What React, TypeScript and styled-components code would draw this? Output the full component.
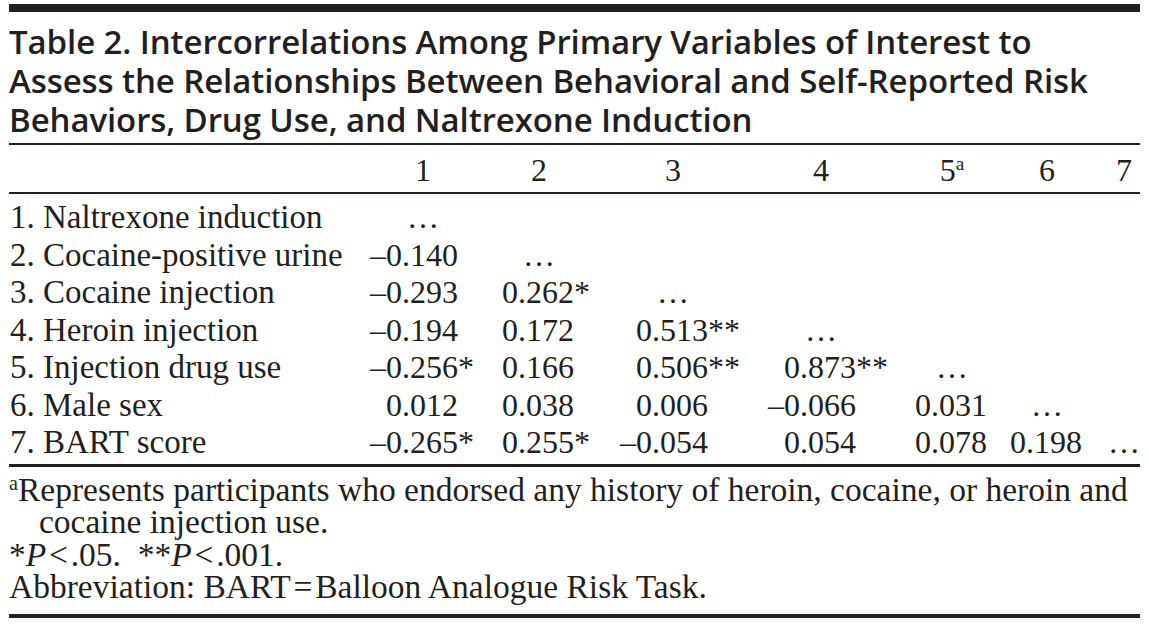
import React from 'react';
import styled, { createGlobalStyle } from 'styled-components';

const GlobalStyle = createGlobalStyle`
  html, body {
    margin: 0;
    padding: 0;
    background: #ffffff;
  }
`;

const INK = '#231f20';

const Page = styled.div`
  width: 1131px;
  padding: 4px 9px 0 9px;
  color: ${INK};
`;

const TopBar = styled.div`
  height: 8px;
  background: ${INK};
`;

const Title = styled.h1`
  margin: 10px 0 0 0;
  font-family: "Open Sans", "Noto Sans", sans-serif;
  font-weight: 600;
  font-size: 33px;
  line-height: 39px;
  letter-spacing: -0.1px;
  white-space: nowrap;
`;

const Rule = styled.div<{ $weight: number }>`
  height: ${(p) => p.$weight}px;
  background: ${INK};
`;

const Table = styled.div`
  font-family: "Liberation Serif", "Times New Roman", serif;
  font-size: 32px;
`;

const COLUMNS = '361px 116px 134px 148px 131px 95px 114px 1fr';

const HeadRow = styled.div`
  display: grid;
  grid-template-columns: ${COLUMNS};
  align-items: baseline;
  height: 47px;
  padding-top: 7px;
  box-sizing: border-box;
  line-height: 37px;
`;

const Body = styled.div`
  padding: 5px 0 2px 0;
`;

const Row = styled.div`
  display: grid;
  grid-template-columns: ${COLUMNS};
  align-items: baseline;
  line-height: 37.5px;
  white-space: nowrap;
`;

const Label = styled.div`
  padding-left: 1px;
  font-size: 33px;
`;

const Cell = styled.div`
  display: flex;
  align-items: baseline;
`;

const Minus = styled.span`
  display: inline-block;
  width: 16px;
`;

const Centered = styled.span<{ $width?: number }>`
  display: inline-block;
  width: ${(p) => p.$width ?? 74}px;
  text-align: center;
`;

const Sup = styled.sup`
  font-size: 0.6em;
  line-height: 0;
  vertical-align: 0.55em;
`;

const Notes = styled.div`
  font-family: "Liberation Serif", "Times New Roman", serif;
  font-size: 33.5px;
  padding: 7px 0 10px 0;
`;

const Note = styled.p<{ $hang?: boolean }>`
  margin: 0;
  line-height: 32.5px;
  padding-left: ${(p) => (p.$hang ? 30 : 0)}px;
  text-indent: ${(p) => (p.$hang ? -30 : 0)}px;
`;

type Value = string | null;

const rows: { label: string; values: Value[] }[] = [
  { label: '1. Naltrexone induction', values: ['…'] },
  { label: '2. Cocaine-positive urine', values: ['–0.140', '…'] },
  { label: '3. Cocaine injection', values: ['–0.293', '0.262*', '…'] },
  { label: '4. Heroin injection', values: ['–0.194', '0.172', '0.513**', '…'] },
  { label: '5. Injection drug use', values: ['–0.256*', '0.166', '0.506**', '0.873**', '…'] },
  { label: '6. Male sex', values: ['0.012', '0.038', '0.006', '–0.066', '0.031', '…'] },
  { label: '7. BART score', values: ['–0.265*', '0.255*', '–0.054', '0.054', '0.078', '0.198', '…'] },
];

const ValueCell: React.FC<{ value: Value; last?: boolean }> = ({ value, last }) => {
  if (value === null) return <Cell />;
  if (value === '…') {
    return (
      <Cell>
        {!last && <Minus />}
        <Centered $width={last ? 32 : 74}>…</Centered>
      </Cell>
    );
  }
  const negative = value.startsWith('–');
  return (
    <Cell>
      <Minus>{negative ? '–' : ''}</Minus>
      <span>{negative ? value.slice(1) : value}</span>
    </Cell>
  );
};

const headers = ['1', '2', '3', '4', '5', '6'];

export default function App() {
  return (
    <>
      <GlobalStyle />
      <Page>
        <TopBar />
        <Title>
          Table 2. Intercorrelations Among Primary Variables of Interest to
          <br />
          Assess the Relationships Between Behavioral and Self-Reported Risk
          <br />
          Behaviors, Drug Use, and Naltrexone Induction
        </Title>
        <Rule $weight={2} style={{ marginTop: 4 }} />
        <Table>
          <HeadRow>
            <div />
            {headers.map((h) => (
              <Cell key={h}>
                <Minus />
                <Centered>
                  {h}
                  {h === '5' && <Sup>a</Sup>}
                </Centered>
              </Cell>
            ))}
            <Cell>
              <Centered $width={32}>7</Centered>
            </Cell>
          </HeadRow>
          <Rule $weight={2} />
          <Body>
            {rows.map((r) => (
              <Row key={r.label}>
                <Label>{r.label}</Label>
                {Array.from({ length: 7 }).map((_, i) => (
                  <ValueCell key={i} value={r.values[i] ?? null} last={i === 6} />
                ))}
              </Row>
            ))}
          </Body>
        </Table>
        <Rule $weight={3} />
        <Notes>
          <Note $hang>
            <Sup>a</Sup>Represents participants who endorsed any history of heroin, cocaine, or heroin and
            cocaine injection use.
          </Note>
          <Note>
            *<i>P</i>&#8202;&lt;&#8202;.05.&ensp;**<i>P</i>&#8202;&lt;&#8202;.001.
          </Note>
          <Note>Abbreviation: BART&#8202;=&#8202;Balloon Analogue Risk Task.</Note>
        </Notes>
        <Rule $weight={4} />
      </Page>
    </>
  );
}
